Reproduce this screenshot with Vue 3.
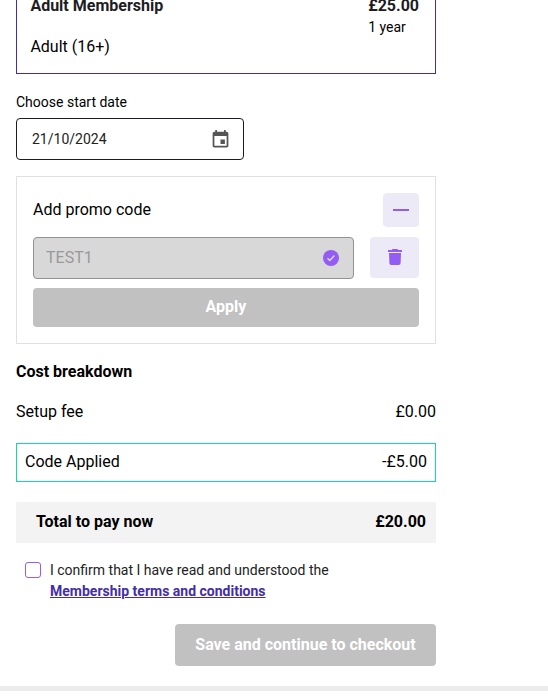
<script setup>
import { ref, computed } from 'vue';

const membership = {
	name: 'Adult Membership',
	type: 'Adult (16+)',
	price: 25,
	length: '1 year',
};

const startDate = ref('21/10/2024');
const promoCode = ref('TEST1');
const promoOpen = ref(true);
const discount = ref(5);
const setupFee = 0;
const confirmed = ref(false);

const total = computed(() => membership.price + setupFee - discount.value);

const money = (value) => {
	return (value < 0 ? '-' : '') + '£' + Math.abs(value).toFixed(2);
}

const removeCode = () => {
	promoCode.value = '';
	discount.value = 0;
}
</script>

<template>
	<div class="page">
		<div class="content">
			<div class="membership">
				<div>
					<div class="membership-name">{{ membership.name }}</div>
					<div class="membership-type">{{ membership.type }}</div>
				</div>
				<div class="membership-cost">
					<div class="membership-name">{{ money(membership.price) }}</div>
					<div class="membership-length">{{ membership.length }}</div>
				</div>
			</div>

			<div class="date-label">Choose start date</div>
			<div class="date-input">
				<span>{{ startDate }}</span>
				<svg width="21" height="21" viewBox="0 0 24 24">
					<path fill="#555" d="M17 12h-5v5h5v-5zM16 1v2H8V1H6v2H5c-1.11 0-1.99.9-1.99 2L3 19a2 2 0 0 0 2 2h14c1.1 0 2-.9 2-2V5c0-1.1-.9-2-2-2h-1V1h-2zm3 18H5V8h14v11z" />
				</svg>
			</div>

			<div class="promo">
				<div class="promo-header">
					<span>Add promo code</span>
					<button class="icon-button toggle" @click="promoOpen = !promoOpen">
						<svg width="16" height="16" viewBox="0 0 16 16">
							<path fill="#935cf2" d="M0 7h16v2H0z" />
						</svg>
					</button>
				</div>
				<div v-if="promoOpen">
					<div class="promo-row">
						<div class="promo-input">
							<span>{{ promoCode }}</span>
							<svg width="16" height="16" viewBox="0 0 16 16">
								<circle cx="8" cy="8" r="8" fill="#935cf2" />
								<path fill="none" stroke="#dcd6e6" stroke-width="1.5" d="M4.5 8.2l2.3 2.2 4.6-4.8" />
							</svg>
						</div>
						<button class="icon-button trash" @click="removeCode">
							<svg width="14" height="16" viewBox="0 0 14 16">
								<path fill="#935cf2" d="M4.5 0h5l.8 1H14v2H0V1h3.7zM1 4h12l-.4 10.2A2 2 0 0 1 10.7 16H3.3a2 2 0 0 1-1.9-1.8z" />
							</svg>
						</button>
					</div>
					<button class="button apply" disabled>Apply</button>
				</div>
			</div>

			<div class="cost-title">Cost breakdown</div>
			<div class="cost-row">
				<span>Setup fee</span>
				<span>{{ money(setupFee) }}</span>
			</div>
			<div class="cost-row applied">
				<span>Code Applied</span>
				<span>{{ money(-discount) }}</span>
			</div>
			<div class="cost-row total">
				<span>Total to pay now</span>
				<span>{{ money(total) }}</span>
			</div>

			<label class="confirm">
				<input type="checkbox" v-model="confirmed" />
				<span>I confirm that I have read and understood the<br /><a href="#">Membership terms and conditions</a></span>
			</label>

			<button class="button checkout" disabled>Save and continue to checkout</button>
		</div>
		<div class="divider"></div>
	</div>
</template>

<style>
body {
	margin: 0;
	background: #fff;
}
</style>

<style scoped>
.page {
	display: flex;
	flex-direction: column;
	height: 698px;
	overflow: hidden;
	font-family: Roboto, sans-serif;
	font-size: 16px;
	line-height: 20px;
	color: #000;
}

.page * {
	box-sizing: border-box;
}

.content {
	display: flex;
	flex-direction: column;
	width: 420px;
	height: 686px;
	flex-shrink: 0;
	margin-left: 16px;
}

.membership {
	display: flex;
	justify-content: space-between;
	height: 94px;
	margin-top: -20px;
	padding: 15px 16px 0 13.4px;
	border: 1px solid #432da8;
}

.membership-name {
	font-weight: bold;
	color: #1d1d1f;
}

.membership-type {
	margin-top: 21px;
}

.membership-length {
	margin-top: 1px;
	font-size: 14px;
}

.date-label {
	margin-top: 18px;
	font-size: 14px;
}

.date-input {
	display: flex;
	justify-content: space-between;
	align-items: center;
	width: 228px;
	height: 42px;
	margin-top: 6px;
	padding: 0 12px 0 15px;
	border: 1px solid #1d1b26;
	border-radius: 4px;
	font-size: 14px;
	color: #222;
}

.promo {
	height: 168px;
	margin-top: 16px;
	padding: 16px;
	border: 1px solid #dfdfe5;
}

.promo-header {
	display: flex;
	justify-content: space-between;
	align-items: center;
}

.icon-button {
	display: flex;
	justify-content: center;
	align-items: center;
	padding: 0;
	border: 0;
	border-radius: 4px;
	background: #edeaf7;
	cursor: pointer;
}

.toggle {
	width: 36px;
	height: 34px;
}

.trash {
	width: 49px;
	height: 41px;
	padding-bottom: 1px;
}

.promo-row {
	display: flex;
	gap: 16px;
	margin-top: 10px;
}

.promo-input {
	display: flex;
	flex: 1;
	justify-content: space-between;
	align-items: center;
	height: 42px;
	padding: 0 14px 0 12px;
	border: 1px solid #929292;
	border-radius: 4px;
	background: #d8d8d8;
	color: #999;
}

.button {
	padding: 0 0 2px;
	border: 0;
	border-radius: 4px;
	background: #c1c1c1;
	color: #fff;
	font-family: inherit;
	font-size: 16px;
	font-weight: bold;
}

.apply {
	display: block;
	width: 100%;
	height: 39px;
	margin-top: 9px;
}

.cost-title {
	margin-top: 18px;
	font-weight: bold;
}

.cost-row {
	display: flex;
	justify-content: space-between;
	align-items: center;
	margin-top: 20px;
}

.applied {
	height: 39px;
	margin-top: 21px;
	padding: 0 8px 2px;
	border: 1px solid #10dba5;
}

.total {
	height: 41px;
	padding: 0 10px 2px 20px;
	background: #f3f3f3;
	font-weight: bold;
}

.confirm {
	display: flex;
	margin-top: 17px;
	padding-left: 9px;
	font-size: 14px;
	line-height: 21px;
	color: #222;
}

.confirm input {
	appearance: none;
	width: 16px;
	height: 16px;
	margin: 2px 9px 0 0;
	border: 1px solid #935cf2;
	border-radius: 3px;
}

.confirm a {
	color: #432da8;
	font-weight: bold;
}

.checkout {
	align-self: flex-end;
	width: 261px;
	height: 42px;
	margin-top: 22px;
}

.divider {
	flex-shrink: 0;
	height: 5px;
	background: #ececec;
}
</style>
